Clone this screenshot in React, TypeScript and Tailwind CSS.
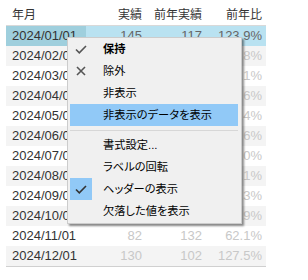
import React from "react";

const rows: { d: string; a: string; b: string; p: string }[] = [
  { d: "2024/01/01", a: "145", b: "117", p: "123.9%" },
  { d: "2024/02/01", a: "136", b: "125", p: "108.8%" },
  { d: "2024/03/01", a: "82", b: "90", p: "91.1%" },
  { d: "2024/04/01", a: "132", b: "125", p: "105.6%" },
  { d: "2024/05/01", a: "118", b: "125", p: "94.4%" },
  { d: "2024/06/01", a: "157", b: "125", p: "125.6%" },
  { d: "2024/07/01", a: "98", b: "100", p: "98.0%" },
  { d: "2024/08/01", a: "100", b: "90", p: "111.1%" },
  { d: "2024/09/01", a: "140", b: "150", p: "93.3%" },
  { d: "2024/10/01", a: "98", b: "90", p: "108.9%" },
  { d: "2024/11/01", a: "82", b: "132", p: "62.1%" },
  { d: "2024/12/01", a: "130", b: "102", p: "127.5%" },
];

const Check = ({ color }: { color: string }) => (
  <svg width="22" height="22" viewBox="0 0 22 22">
    <path d="M6 11.5 L9.3 14.8 L16 8" fill="none" stroke={color} strokeWidth="1.6" />
  </svg>
);

const Cross = () => (
  <svg width="22" height="22" viewBox="0 0 22 22">
    <path d="M7 7 L15 15 M15 7 L7 15" fill="none" stroke="#555" strokeWidth="1.6" />
  </svg>
);

function Item({
  label,
  icon,
  bold,
  hl,
  iconBg,
}: {
  label: string;
  icon?: React.ReactNode;
  bold?: boolean;
  hl?: boolean;
  iconBg?: boolean;
}) {
  return (
    <div className={`flex h-[22px] items-center ${hl ? "bg-[#91c9f7]" : ""}`}>
      <div className={`flex h-[22px] w-[22px] items-center justify-center ${iconBg ? "bg-[#91c9f7]" : ""}`}>
        {icon}
      </div>
      <span
        className={`ml-[11px] text-[11.25px] leading-[16px] text-[#000] [font-feature-settings:'palt'] ${bold ? "font-bold" : ""}`}
      >
        {label}
      </span>
    </div>
  );
}

export default function App() {
  return (
    <div
      className="relative h-[280px] w-[308px] overflow-hidden bg-white"
      style={{ fontFamily: '"Liberation Sans", "Noto Sans CJK JP", sans-serif' }}
    >
      <div className="ml-[6px] w-[260px]">
        <div className="flex h-[26px] items-center border-b border-[#d9d9d9] pt-[5px] text-[12px] leading-[16px] text-[#333]">
          <div className="w-[80px] pl-[6px]">年月</div>
          <div className="w-[60px] pr-[4px] text-right">実績</div>
          <div className="w-[60px] pr-[4px] text-right">前年実績</div>
          <div className="w-[60px] pr-[4px] text-right">前年比</div>
        </div>
        <div className="border-b border-[#d0d0d0]">
          {rows.map((r, i) => {
            const sel = i === 0;
            const bg = sel ? "bg-[#b9e2f1]" : i % 2 === 1 ? "bg-[#f4f4f4]" : "bg-white";
            return (
              <div key={r.d} className={`flex h-[20px] items-center text-[13px] leading-[20px] ${bg}`}>
                <div className={`w-[80px] pl-[6px] text-[#333] ${sel ? "bg-[#9fcfdd]" : ""}`}>{r.d}</div>
                <div className={`w-[60px] pr-[4px] text-right ${sel ? "text-[#666]" : "text-[#c8c8c8]"}`}>{r.a}</div>
                <div className={`w-[60px] pr-[4px] text-right ${sel ? "text-[#666]" : "text-[#c8c8c8]"}`}>{r.b}</div>
                <div className={`w-[60px] pr-[4px] text-right ${sel ? "text-[#666]" : "text-[#c8c8c8]"}`}>{r.p}</div>
              </div>
            );
          })}
        </div>
      </div>

      <div className="absolute left-[67px] top-[37px] w-[175px] border border-[#cccccc] bg-[#f0f0f0] pb-[1px] pl-[2px] pr-[3px] shadow-[2px_2px_2px_rgba(0,0,0,0.45)]">
        <Item label="保持" bold icon={<Check color="#555" />} />
        <Item label="除外" icon={<Cross />} />
        <Item label="非表示" />
        <Item label="非表示のデータを表示" hl />
        <div className="flex h-[8px] items-center">
          <div className="h-px w-full bg-[#d7d7d7]" />
        </div>
        <Item label="書式設定..." />
        <Item label="ラベルの回転" />
        <Item label="ヘッダーの表示" iconBg icon={<Check color="#333" />} />
        <Item label="欠落した値を表示" />
      </div>
    </div>
  );
}
